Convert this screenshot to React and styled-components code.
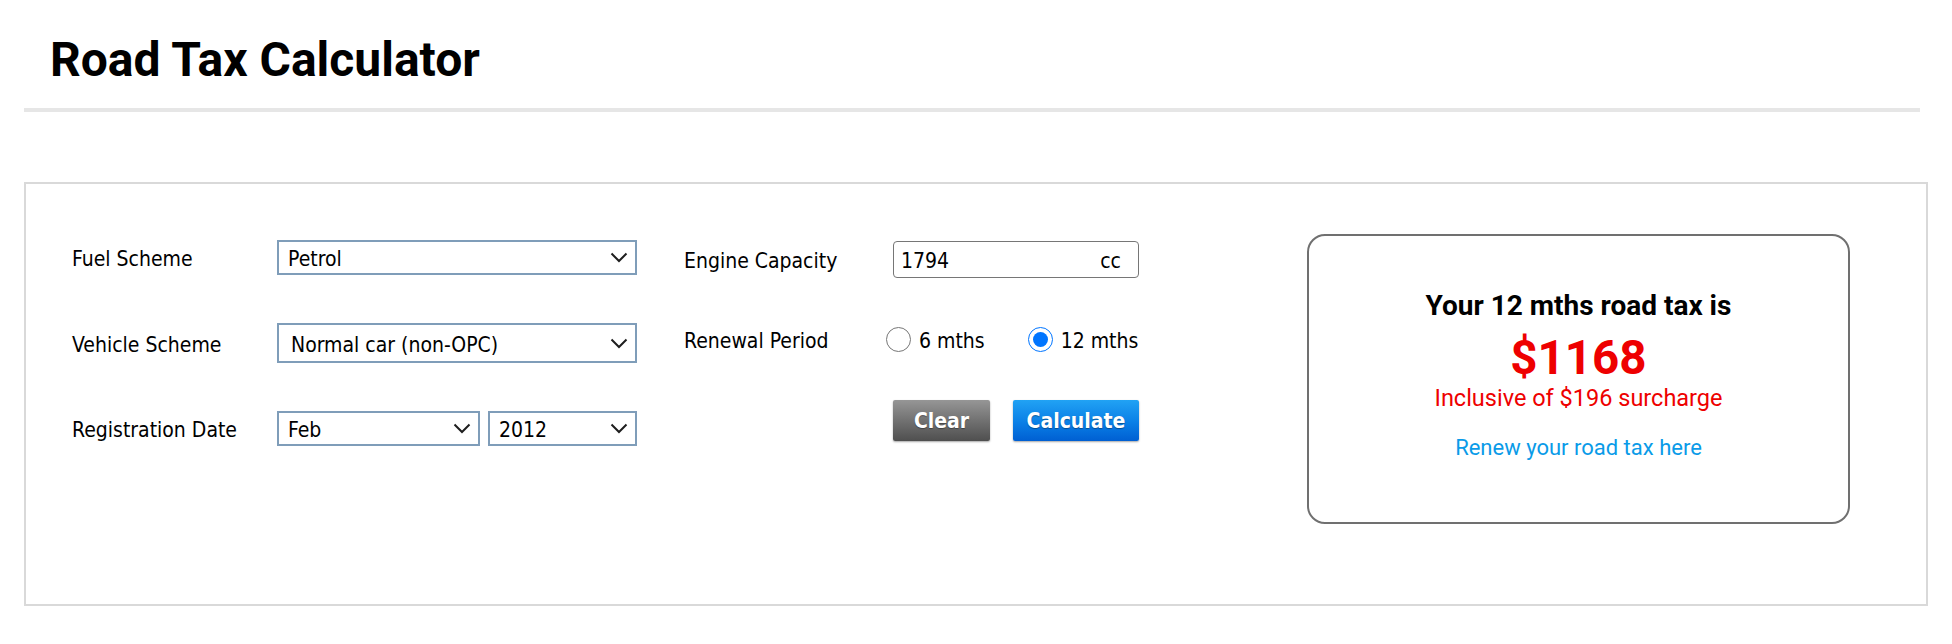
import React from "react";
import styled, { createGlobalStyle } from "styled-components";

const Global = createGlobalStyle`
  html, body { margin: 0; padding: 0; background: #ffffff; }
  body { font-family: "DejaVu Sans Condensed", "DejaVu Sans", sans-serif; color: #000; }
  * { box-sizing: border-box; }
`;

const Page = styled.div`
  width: 1952px;
  padding: 32px 0 0 24px;
`;

const Header = styled.header`
  width: 1896px;
  border-bottom: 4px solid #e6e6e6;
  padding: 0 0 20px 26px;
`;

const Title = styled.h1`
  margin: 0;
  font-family: Roboto, "Liberation Sans", sans-serif;
  font-weight: 700;
  font-size: 48px;
  line-height: 56px;
`;

const Panel = styled.section`
  margin-top: 70px;
  width: 1904px;
  height: 424px;
  border: 2px solid #d9d9d9;
  display: flex;
  align-items: flex-start;
`;

const Column = styled.div`
  display: flex;
  flex-direction: column;
  padding-top: ${(p) => p.$top}px;
  margin-left: ${(p) => p.$left}px;
  gap: ${(p) => p.$gap}px;
`;

const Row = styled.div`
  display: flex;
  align-items: center;
  height: ${(p) => p.$h}px;
  margin-top: ${(p) => p.$mt || 0}px;
`;

const Label = styled.div`
  width: ${(p) => p.$w}px;
  flex: none;
  font-size: 21px;
  line-height: 24px;
  padding-top: 3px;
  white-space: nowrap;
`;

const SelectBox = styled.div`
  width: ${(p) => p.$w}px;
  height: 100%;
  border: 2px solid #7f9db9;
  background: #fff;
  display: flex;
  align-items: center;
  justify-content: space-between;
  padding: 3px 7px 0 ${(p) => p.$pl}px;
  font-size: 21px;
  line-height: 24px;
  flex: none;
  & + & { margin-left: 8px; }
`;

const Chevron = () => (
  <svg width="18" height="11" viewBox="0 0 18 11" style={{ marginTop: -3 }}>
    <path d="M1.5 1.5 L9 9 L16.5 1.5" fill="none" stroke="#1e1e1e" strokeWidth="2" />
  </svg>
);

const Select = ({ w, pl = 9, children }) => (
  <SelectBox $w={w} $pl={pl}>
    <span>{children}</span>
    <Chevron />
  </SelectBox>
);

const InputBox = styled.div`
  width: 246px;
  height: 100%;
  border: 1.5px solid #767676;
  border-radius: 4px;
  display: flex;
  align-items: center;
  justify-content: space-between;
  padding: 3px 17px 0 7px;
  font-size: 21px;
  line-height: 24px;
`;

const RadioGroup = styled.div`
  display: flex;
  align-items: center;
  margin-left: -7px;
  gap: 43px;
`;

const RadioLabel = styled.label`
  display: flex;
  align-items: center;
  gap: 8px;
  font-size: 21px;
  line-height: 24px;
`;

const RadioInput = styled.input`
  width: 25px;
  height: 25px;
  margin: 0;
  accent-color: #0075ff;
`;

const RadioText = styled.span`
  padding-top: 3px;
`;

const Buttons = styled.div`
  display: flex;
  gap: 23px;
`;

const Button = styled.button`
  height: 41px;
  width: ${(p) => p.$w}px;
  border: none;
  border-radius: 2px;
  color: #fff;
  font-family: "DejaVu Sans Condensed", "DejaVu Sans", sans-serif;
  font-weight: 700;
  font-size: 21px;
  padding: 0;
  text-shadow: 0 1px 1px rgba(0, 0, 0, 0.35);
  box-shadow: 0 1px 2px rgba(0, 0, 0, 0.35);
  background: ${(p) =>
    p.$variant === "primary"
      ? "linear-gradient(#21a2f4, #0a7fe6 55%, #005fd2)"
      : "linear-gradient(#969696, #6e6e6e 55%, #4f4f4f)"};
`;

const ResultBox = styled.div`
  margin: 50px 76px 0 auto;
  width: 543px;
  height: 290px;
  border: 2px solid #707070;
  border-radius: 18px;
  padding-top: 53px;
  text-align: center;
  font-family: Roboto, "Liberation Sans", sans-serif;
`;

const ResultTitle = styled.div`
  font-weight: 700;
  font-size: 28px;
  line-height: 34px;
`;

const Amount = styled.div`
  margin-top: 10px;
  font-weight: 700;
  font-size: 47.5px;
  line-height: 50px;
  color: #ee0000;
`;

const Surcharge = styled.div`
  margin-top: 1px;
  font-size: 23.5px;
  line-height: 28px;
  color: #ee0000;
`;

const RenewLink = styled.a`
  display: block;
  margin-top: 22px;
  font-size: 22px;
  line-height: 28px;
  color: #0a9be8;
  text-decoration: none;
`;

export default function App() {
  return (
    <>
      <Global />
      <Page>
        <Header>
          <Title>Road Tax Calculator</Title>
        </Header>
        <Panel>
          <Column $top={56} $left={46} $gap={48}>
            <Row $h={35}>
              <Label $w={205}>Fuel Scheme</Label>
              <Select w={360}>Petrol</Select>
            </Row>
            <Row $h={40}>
              <Label $w={205}>Vehicle Scheme</Label>
              <Select w={360} pl={12}>Normal car (non-OPC)</Select>
            </Row>
            <Row $h={35}>
              <Label $w={205}>Registration Date</Label>
              <Select w={203}>Feb</Select>
              <Select w={149}>2012</Select>
            </Row>
          </Column>
          <Column $top={57} $left={47} $gap={0}>
            <Row $h={37}>
              <Label $w={209}>Engine Capacity</Label>
              <InputBox>
                <span>1794</span>
                <span>cc</span>
              </InputBox>
            </Row>
            <Row $h={37} $mt={43}>
              <Label $w={209}>Renewal Period</Label>
              <RadioGroup>
                <RadioLabel>
                  <RadioInput type="radio" name="period" />
                  <RadioText>6 mths</RadioText>
                </RadioLabel>
                <RadioLabel>
                  <RadioInput type="radio" name="period" defaultChecked />
                  <RadioText>12 mths</RadioText>
                </RadioLabel>
              </RadioGroup>
            </Row>
            <Row $h={41} $mt={42}>
              <Label $w={209} />
              <Buttons>
                <Button $w={97}>Clear</Button>
                <Button $w={126} $variant="primary">Calculate</Button>
              </Buttons>
            </Row>
          </Column>
          <ResultBox>
            <ResultTitle>Your 12 mths road tax is</ResultTitle>
            <Amount>$1168</Amount>
            <Surcharge>Inclusive of $196 surcharge</Surcharge>
            <RenewLink href="#">Renew your road tax here</RenewLink>
          </ResultBox>
        </Panel>
      </Page>
    </>
  );
}
